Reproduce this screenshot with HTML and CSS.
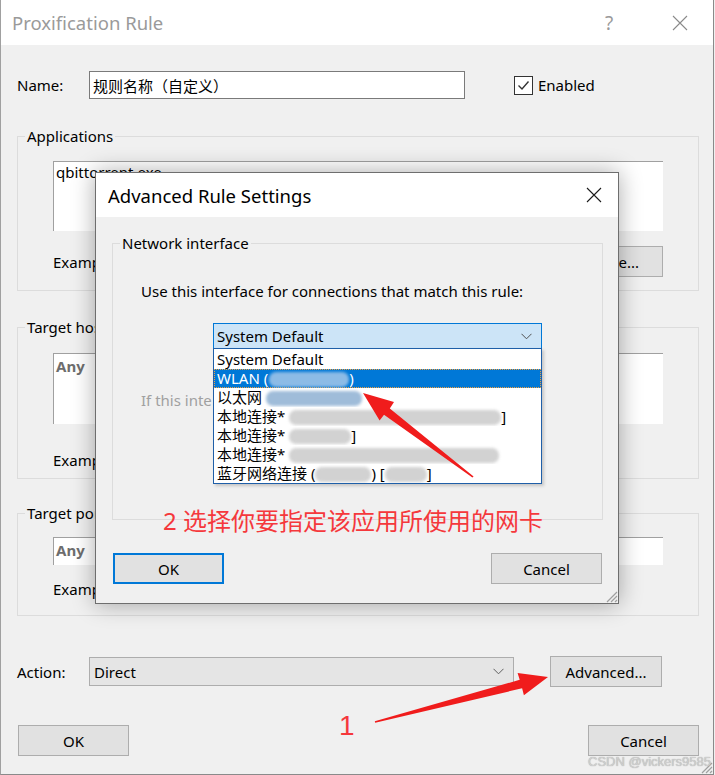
FILE: index.html
```
<!DOCTYPE html>
<html>
<head>
<meta charset="utf-8">
<link rel="stylesheet" href="styles.css">
</head>
<body>
<div class="main">
  <div class="titlebar">
    <span class="title">Proxification Rule</span>
    <span class="tb-btn help">?</span>
    <span class="tb-btn close"><svg width="16" height="16" viewBox="0 0 16 16"><path d="M1 1L15 15M15 1L1 15" stroke="#8a8a8a" stroke-width="1.1" fill="none"/></svg></span>
  </div>
  <div class="content">
    <div class="name-row">
      <span class="lbl">Name:</span>
      <div class="field name-input">规则名称（自定义）</div>
      <span class="check"><svg width="17" height="17" viewBox="0 0 17 17"><path d="M3.5 8.5L7 12L13.5 4.5" stroke="#333" stroke-width="1.4" fill="none"/></svg></span>
      <span class="check-label">Enabled</span>
    </div>

    <fieldset class="group apps">
      <legend>Applications</legend>
      <div class="gb-body apps-body">
        <div class="textarea">qbittorrent.exe</div>
        <div class="example-row">
          <span class="example">Example: iexplore.exe; "C:\some app.exe"; fire*.exe; *.bin</span>
          <button class="btn browse">Browse...</button>
        </div>
      </div>
    </fieldset>

    <fieldset class="group hosts">
      <legend>Target hosts</legend>
      <div class="gb-body hosts-body">
        <div class="textarea tall"><span class="any">Any</span></div>
        <div class="example-line"><span class="example">Example: www.example.com; 127.0.0.1; *.example.com; 192.168.*</span></div>
      </div>
    </fieldset>

    <fieldset class="group ports">
      <legend>Target ports</legend>
      <div class="gb-body ports-body">
        <div class="textarea short"><span class="any">Any</span></div>
        <div class="example-line"><span class="example">Example: 80; 8000-9000; 3128</span></div>
      </div>
    </fieldset>

    <div class="action-row">
      <span class="lbl">Action:</span>
      <div class="combo">
        <span>Direct</span>
        <svg width="11" height="7" viewBox="0 0 11 7"><path d="M0.5 0.8L5.5 5.8L10.5 0.8" stroke="#606060" stroke-width="1" fill="none"/></svg>
      </div>
      <button class="btn advanced">Advanced...</button>
    </div>

    <div class="bottom-row">
      <button class="btn ok-main">OK</button>
      <button class="btn">Cancel</button>
    </div>
  </div>
  <svg class="grip main-grip" width="13" height="13" viewBox="0 0 13 13"><path d="M12 2L2 12M12 6L6 12M12 10L10 12" stroke="#a0a0a0" stroke-width="1.2"/></svg>
</div>

<div class="dialog">
  <div class="dlg-title">
    <span class="dlg-title-text">Advanced Rule Settings</span>
    <span class="dlg-close"><svg width="16" height="16" viewBox="0 0 16 16"><path d="M1 1L15 15M15 1L1 15" stroke="#1a1a1a" stroke-width="1.1" fill="none"/></svg></span>
  </div>
  <div class="dlg-body">
    <fieldset class="group net">
      <legend>Network interface</legend>
      <div class="net-body">
        <div class="net-line">Use this interface for connections that match this rule:</div>
        <div class="dcombo">
          <span>System Default</span>
          <svg width="11" height="7" viewBox="0 0 11 7"><path d="M0.5 0.8L5.5 5.8L10.5 0.8" stroke="#505050" stroke-width="1" fill="none"/></svg>
        </div>
        <div class="net-line disabled"><span class="clip">If this interface is unavailable:</span></div>
      </div>
    </fieldset>
    <div class="dlg-buttons">
      <button class="btn ok-dlg">OK</button>
      <button class="btn cancel-dlg">Cancel</button>
    </div>
  </div>
  <ul class="dropdown">
    <li>System Default</li>
    <li class="sel">WLAN (<span class="blur b-wlan"></span>)</li>
    <li>以太网 <span class="blur b-eth"></span></li>
    <li>本地连接* <span class="blur b-gray w210"></span>]</li>
    <li>本地连接* <span class="blur b-gray w60"></span>]</li>
    <li>本地连接* <span class="blur b-gray w200"></span></li>
    <li>蓝牙网络连接 (<span class="blur b-gray w56"></span>) [<span class="blur b-gray w42"></span>]</li>
  </ul>
  <svg class="grip dlg-grip" width="13" height="13" viewBox="0 0 13 13"><path d="M12 2L2 12M12 6L6 12M12 10L10 12" stroke="#a0a0a0" stroke-width="1.2"/></svg>
</div>

<div class="note note-2">2 选择你要指定该应用所使用的网卡</div>
<div class="note note-1">1</div>
<svg class="arrows" width="715" height="775" viewBox="0 0 715 775">
  <polygon fill="#f01c1c" points="363,393 394,402 389.8,408.4 473.6,476.4 472.4,477.6 384,414.8 379.6,420.6"/>
  <polygon fill="#f01c1c" points="548,677 523.9,695.2 522.1,688.3 375.2,722.8 374.8,721.2 519.7,679.8 517.6,672.9"/>
</svg>
<div class="watermark">CSDN @vickers9585</div>
</body>
</html>
```
FILE: styles.css
```
html, body {
  margin: 0;
  padding: 0;
}
body {
  width: 715px;
  height: 775px;
  overflow: hidden;
  position: relative;
  font-family: "Noto Sans", "Noto Sans CJK SC", sans-serif;
  font-size: 15px;
  color: #000;
  background: #f0f0f0;
}
.main {
  position: relative;
  width: 714px;
  height: 775px;
  box-sizing: border-box;
  border-left: 1px solid #a0a0a0;
  border-right: 1px solid #8a8a8a;
  border-bottom: 1px solid #8a8a8a;
  background: #f0f0f0;
}
.titlebar {
  height: 45px;
  background: #fff;
  display: flex;
  align-items: center;
  padding-left: 11px;
}
.title {
  flex: 1;
  font-size: 18.5px;
  color: #9a9a9a;
}
.tb-btn {
  width: 46px;
  text-align: center;
  display: flex;
  justify-content: center;
  align-items: center;
}
.help {
  font-size: 19px;
  color: #9a9a9a;
  margin-right: 25px;
}
.close {
  margin-right: 10px;
}
.content {
  padding-left: 16px;
}
.name-row {
  display: flex;
  align-items: center;
  height: 28px;
  margin-top: 26px;
}
.lbl {
  width: 72px;
  flex: none;
}
.field {
  box-sizing: border-box;
  height: 28px;
  border: 1px solid #7a7a7a;
  background: #fff;
  display: flex;
  align-items: center;
  padding-left: 3px;
}
.name-input {
  width: 376px;
}
.check {
  margin-left: 49px;
  width: 19px;
  height: 19px;
  box-sizing: border-box;
  border: 1px solid #333;
  background: #fff;
  display: flex;
  align-items: center;
  justify-content: center;
}
.check-label {
  margin-left: 5px;
}
.group {
  margin: 0;
  padding: 0;
  border: 1px solid #dcdcdc;
  width: 682px;
  box-sizing: border-box;
  min-width: 0;
}
.group legend {
  padding: 0 2px;
  margin-left: 7px;
  line-height: 20px;
  height: 20px;
}
.apps { margin-top: 27px; }
.hosts { margin-top: 26px; }
.ports { margin-top: 24px; }
.gb-body {
  padding: 0 35px;
}
.apps-body { padding-top: 15px; padding-bottom: 13px; }
.hosts-body { padding-top: 16px; padding-bottom: 8px; }
.ports-body { padding-top: 14px; padding-bottom: 16px; }
.textarea {
  height: 70px;
  box-sizing: border-box;
  border-top: 1px solid #a0a0a0;
  border-left: 1px solid #a0a0a0;
  background: #fff;
  padding: 0 2px;
  line-height: 20px;
}
.textarea.tall { height: 71px; padding-top: 2px; }
.textarea.short { height: 28px; padding-top: 2px; }
.any {
  font-weight: bold;
  color: #6d6d6d;
}
.example-row {
  display: flex;
  justify-content: space-between;
  align-items: center;
  height: 31px;
  margin-top: 15px;
}
.example-line {
  height: 20px;
  line-height: 20px;
}
.hosts .example-line { margin-top: 26px; }
.ports .example-line { margin-top: 14px; }
.example {
  display: inline-block;
  max-width: 480px;
  overflow: hidden;
  white-space: nowrap;
}
.btn {
  font: inherit;
  color: #000;
  background: #e1e1e1;
  border: 1px solid #adadad;
  height: 31px;
  width: 111px;
  padding: 0;
  box-sizing: border-box;
}
.browse { width: 112px; }
.action-row {
  display: flex;
  align-items: center;
  height: 31px;
  margin-top: 40px;
}
.combo {
  width: 425px;
  height: 29px;
  box-sizing: border-box;
  border: 1px solid #adadad;
  background: #e5e5e5;
  display: flex;
  align-items: center;
  justify-content: space-between;
  padding: 0 9px 0 4px;
}
.advanced {
  margin-left: 36px;
  width: 112px;
}
.bottom-row {
  display: flex;
  justify-content: space-between;
  width: 681px;
  margin-left: 1px;
  margin-top: 38px;
}
.grip {
  position: absolute;
}
.main-grip { right: 0; bottom: 0; }

.dialog {
  position: absolute;
  left: 95px;
  top: 172px;
  width: 524px;
  height: 432px;
  box-sizing: border-box;
  border: 1px solid #6e6e6e;
  background: #f0f0f0;
  box-shadow: 0 0 22px rgba(0, 0, 0, 0.33);
}
.dlg-title {
  height: 44px;
  background: #fff;
  display: flex;
  align-items: center;
  padding-left: 12px;
}
.dlg-title-text {
  flex: 1;
  font-size: 18.5px;
}
.dlg-close {
  width: 46px;
  display: flex;
  justify-content: center;
  margin-right: 1px;
}
.dlg-body {
  padding: 16px 0 0 16px;
}
.net {
  width: 491px;
}
.net-body {
  padding: 28px 0 109px 28px;
}
.net-line {
  line-height: 20px;
  height: 20px;
}
.net-line.disabled {
  color: #a0a0a0;
  margin-top: 41px;
}
.clip {
  display: inline-block;
  max-width: 71px;
  overflow: hidden;
  white-space: nowrap;
  vertical-align: top;
}
.dcombo {
  margin-top: 22px;
  margin-left: 72px;
  width: 329px;
  height: 26px;
  box-sizing: border-box;
  border: 1px solid #0078d7;
  background: #cce4f7;
  display: flex;
  align-items: center;
  justify-content: space-between;
  padding: 0 9px 0 3px;
}
.dlg-buttons {
  display: flex;
  justify-content: space-between;
  width: 489px;
  margin-left: 1px;
  margin-top: 33px;
}
.ok-dlg {
  border: 2px solid #0078d7;
}
.dlg-grip { right: 0; bottom: 0; }

.dropdown {
  position: absolute;
  left: 117px;
  top: 175px;
  width: 329px;
  margin: 0;
  padding: 1px 0 0;
  box-sizing: border-box;
  height: 136px;
  list-style: none;
  background: #fff;
  border: 1px solid #1f5fa8;
  box-shadow: 2px 2px 3px rgba(0, 0, 0, 0.18);
}
.dropdown li {
  height: 19px;
  line-height: 19px;
  padding-left: 3px;
  white-space: nowrap;
  box-sizing: border-box;
  overflow: hidden;
}
.dropdown li.sel {
  background: #0078d7;
  color: #fff;
  outline: 1px dotted #f0a040;
  outline-offset: -1px;
}
.blur {
  display: inline-block;
  height: 15px;
  vertical-align: -3px;
  border-radius: 7px;
  filter: blur(1.5px);
}
.b-wlan { width: 80px; background: #8cbbe6; margin-left: 1px; }
.b-eth { width: 96px; background: #9fbcd9; }
.b-gray { background: #d2d2d2; }
.w210 { width: 212px; }
.w60 { width: 62px; }
.w200 { width: 210px; }
.w56 { width: 56px; }
.w42 { width: 42px; }

.note {
  position: absolute;
  color: #f5383c;
  white-space: nowrap;
}
.note-2 {
  left: 163px;
  top: 506px;
  font-size: 24px;
  line-height: 30px;
  font-family: "Noto Sans", "Noto Sans CJK SC", sans-serif;
}
.note-1 {
  left: 339px;
  top: 711px;
  font-size: 28px;
  line-height: 30px;
  font-family: "Liberation Sans", sans-serif;
}
.arrows {
  position: absolute;
  left: 0;
  top: 0;
}
.watermark {
  position: absolute;
  left: 588px;
  top: 754px;
  font-family: "Liberation Sans", sans-serif;
  font-size: 13px;
  color: #cfcfcf;
  text-shadow: 0 0 1px #9a9a9a;
}
```
